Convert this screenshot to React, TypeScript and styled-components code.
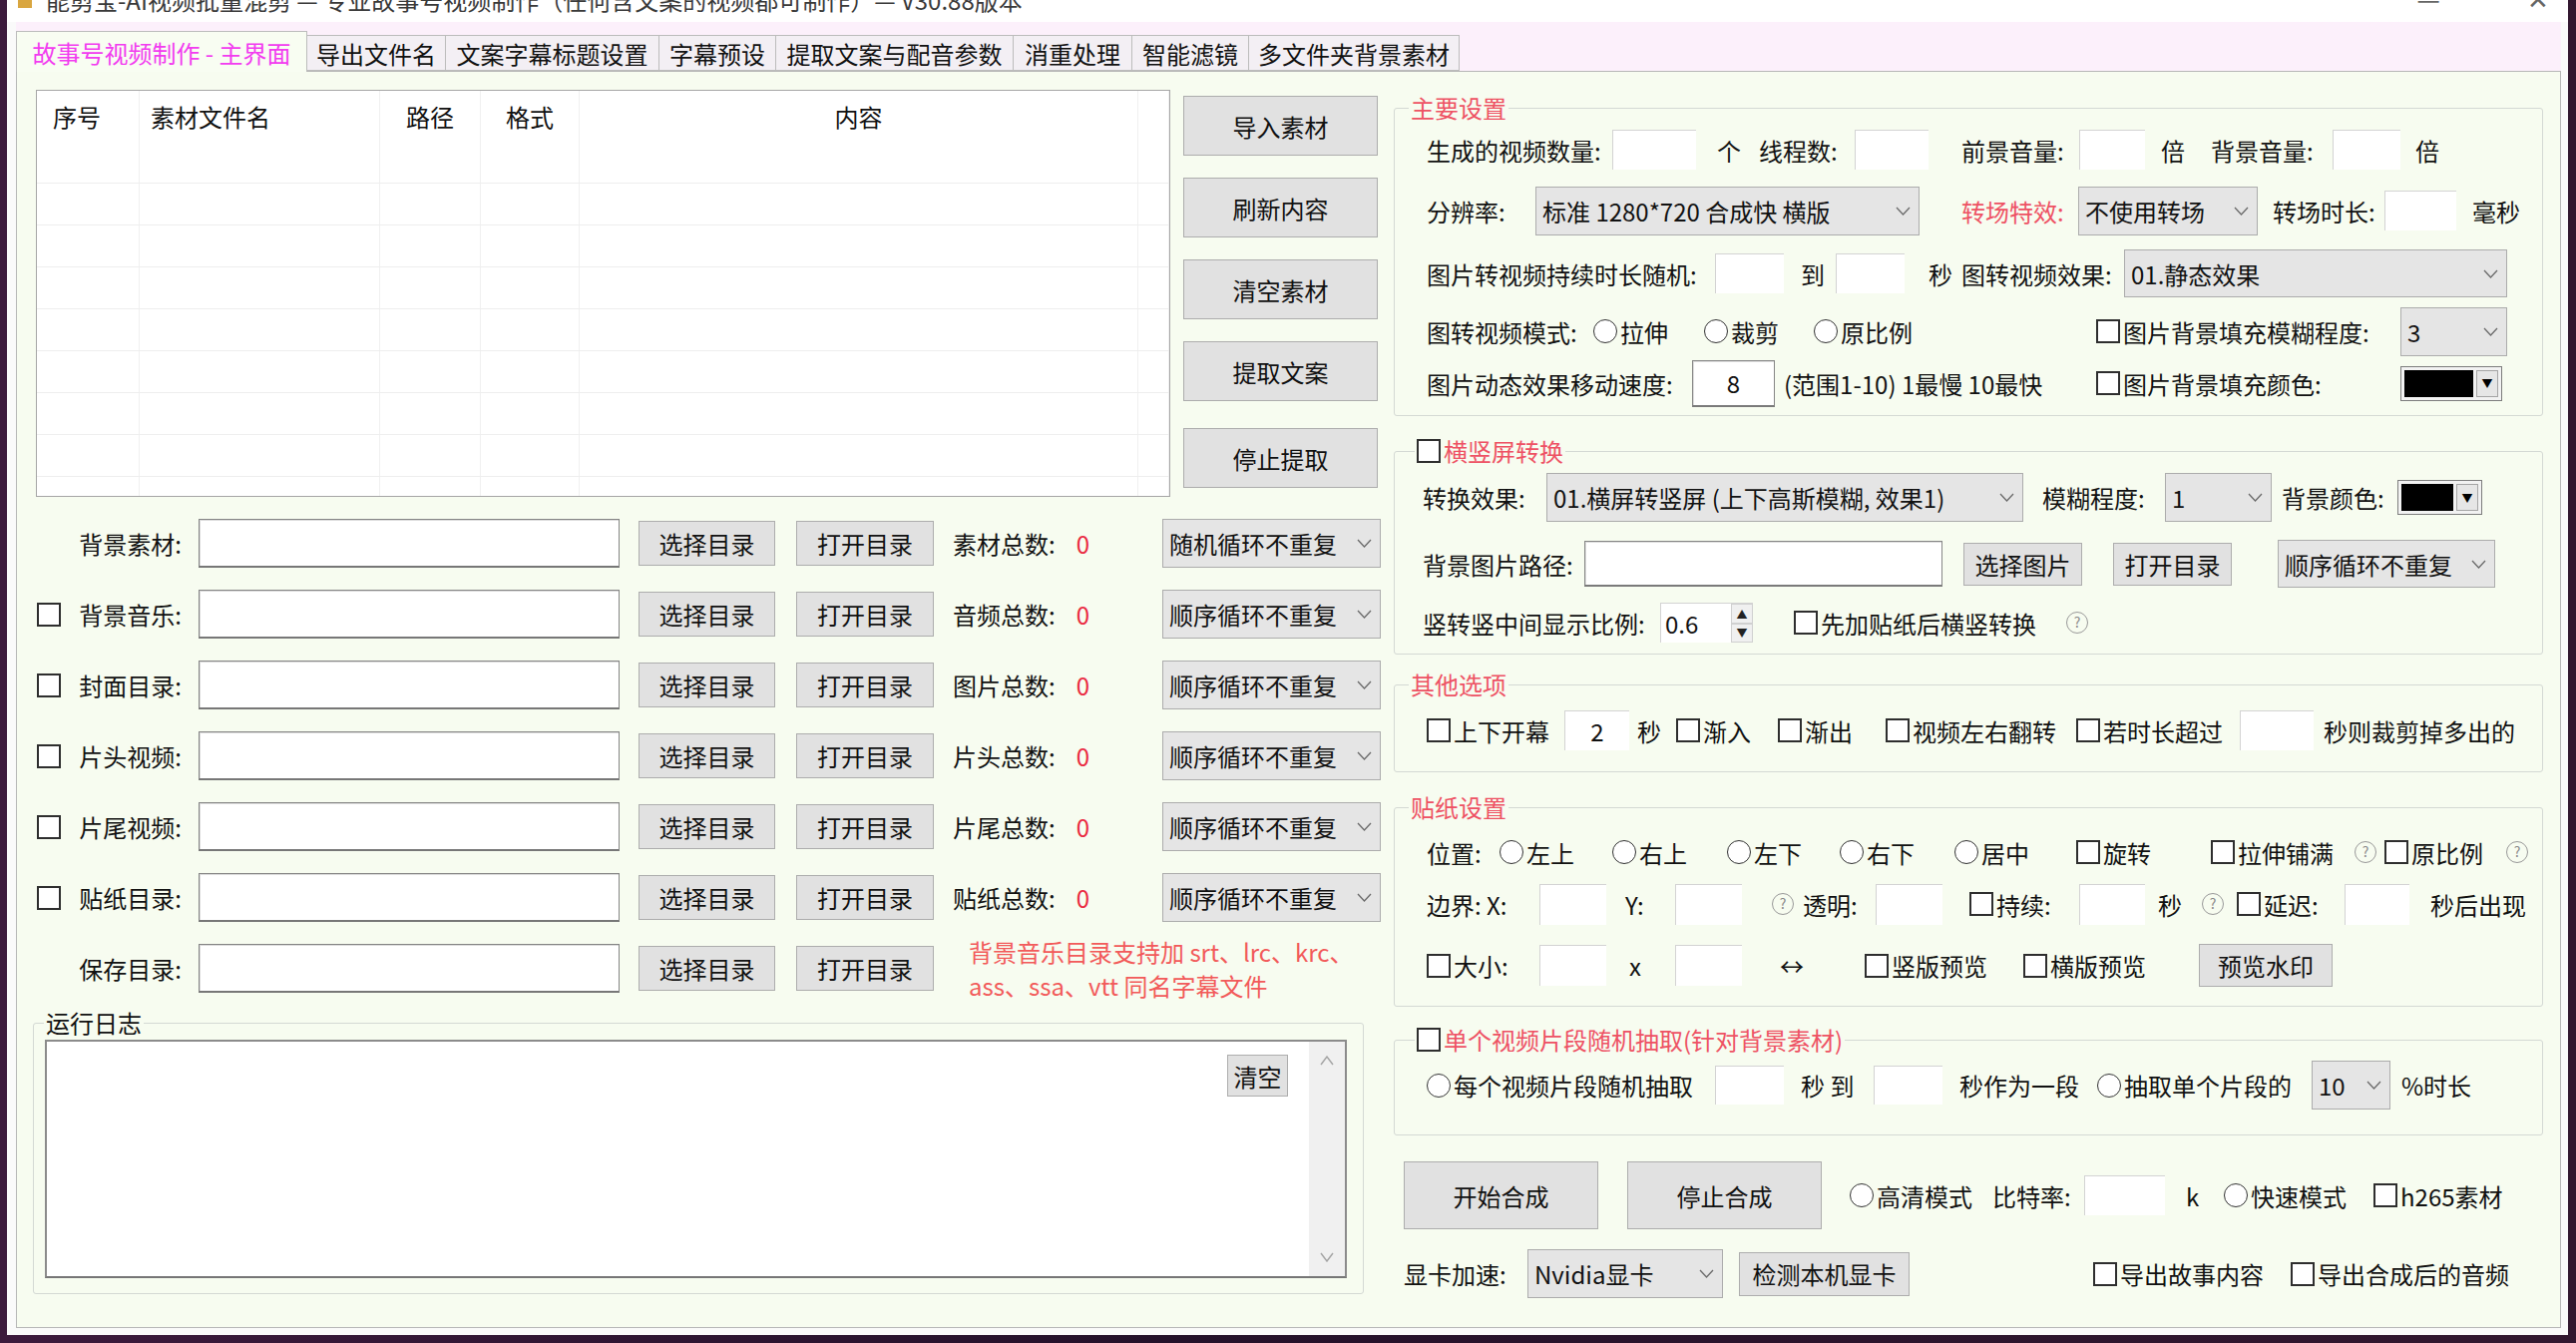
import React from 'react';
import styled, { createGlobalStyle } from 'styled-components';

const FONT = `"Noto Sans CJK SC", "Noto Sans", "Liberation Sans", sans-serif`;
const RED = '#ee5264';

const GlobalStyle = createGlobalStyle`
  html, body { margin: 0; padding: 0; background: #26122b; }
  body { font-family: ${FONT}; font-size: 24px; color: #111; }
  * { box-sizing: border-box; }
`;

const Screen = styled.div`
  width: 2582px;
  height: 1346px;
  overflow: hidden;
  padding-left: 7px;
  background: linear-gradient(90deg, #3c1a3c 0%, #24112a 45%, #32172f 100%);
`;

const Window = styled.div`
  width: 2567px;
  height: 1338px;
  background: #fafafa;
  display: flex;
  flex-direction: column;
`;

const TitleBar = styled.div`
  height: 22px;
  flex-shrink: 0;
  overflow: hidden;
  display: flex;
  align-items: flex-start;
  background: #fff;
  padding-left: 11px;
`;

const TitleIcon = styled.span`
  width: 14px;
  height: 8px;
  margin-right: 14px;
  background: #d9a640;
  flex-shrink: 0;
`;

const TitleText = styled.span`
  font-size: 24px;
  line-height: 24px;
  margin-top: -12px;
  color: #3a3a3a;
  white-space: nowrap;
  flex: 1;
`;

const TitleCtl = styled.span<{ $w: number }>`
  width: ${(p) => p.$w}px;
  font-size: 26px;
  line-height: 26px;
  margin-top: -15px;
  color: #666;
  text-align: center;
`;

const TabControl = styled.div`
  margin: 0 7px 0 9px;
  display: flex;
  flex-direction: column;
`;

const TabStrip = styled.div`
  height: 49px;
  background: #fcf0fb;
  display: flex;
  align-items: flex-end;
`;

const Tab = styled.div<{ $w: number; $active?: boolean }>`
  width: ${(p) => p.$w}px;
  height: ${(p) => (p.$active ? 41 : 36)}px;
  margin-bottom: ${(p) => (p.$active ? -1 : 0)}px;
  border: 1px solid #bcbcbc;
  border-bottom: ${(p) => (p.$active ? 'none' : '1px solid #bcbcbc')};
  background: ${(p) => (p.$active ? '#f8fdf2' : '#f3eff4')};
  color: ${(p) => (p.$active ? '#f23cf0' : '#111')};
  display: flex;
  align-items: center;
  justify-content: center;
  white-space: nowrap;
  position: relative;
  z-index: ${(p) => (p.$active ? 2 : 1)};
  flex-shrink: 0;
  & + & {
    margin-left: -1px;
  }
`;

const Panel = styled.div`
  height: 1260px;
  border: 1px solid #b7b7b7;
  background: #f7fcf0;
  display: flex;
  gap: 12px;
  padding-left: 16px;
`;

const Column = styled.div<{ $w: number }>`
  width: ${(p) => p.$w}px;
  flex-shrink: 0;
  display: flex;
  flex-direction: column;
`;

/* ---------- generic controls ---------- */

const Txt = styled.span<{ $w?: number; $ml?: number; $c?: string }>`
  display: inline-block;
  flex-shrink: 0;
  white-space: nowrap;
  width: ${(p) => (p.$w ? `${p.$w}px` : 'auto')};
  margin-left: ${(p) => p.$ml ?? 0}px;
  color: ${(p) => p.$c ?? '#111'};
`;

const Inp = styled.div<{ $w: number; $h: number; $ml?: number }>`
  width: ${(p) => p.$w}px;
  height: ${(p) => p.$h}px;
  margin-left: ${(p) => p.$ml ?? 0}px;
  flex-shrink: 0;
  background: #fff;
  border-top: 1px solid #d3d3d3;
  border-left: 1px solid #d3d3d3;
  display: flex;
  align-items: center;
  justify-content: center;
`;

const FramedInp = styled.div<{ $w: number; $h: number; $ml?: number }>`
  width: ${(p) => p.$w}px;
  height: ${(p) => p.$h}px;
  margin-left: ${(p) => p.$ml ?? 0}px;
  flex-shrink: 0;
  background: #fff;
  border: 1px solid #868686;
  border-bottom: 2px solid #7a7a7a;
  box-shadow: inset 1px 1px 0 #dedede;
  display: flex;
  align-items: center;
  justify-content: center;
`;

const Btn = styled.div<{ $w: number; $h: number; $ml?: number; $mt?: number }>`
  width: ${(p) => p.$w}px;
  height: ${(p) => p.$h}px;
  margin-left: ${(p) => p.$ml ?? 0}px;
  margin-top: ${(p) => p.$mt ?? 0}px;
  flex-shrink: 0;
  background: #e1e1e1;
  border: 1px solid #adadad;
  display: flex;
  align-items: center;
  justify-content: center;
  white-space: nowrap;
  color: #111;
`;

const SelBox = styled.div<{ $w: number; $h: number; $ml?: number }>`
  width: ${(p) => p.$w}px;
  height: ${(p) => p.$h}px;
  margin-left: ${(p) => p.$ml ?? 0}px;
  flex-shrink: 0;
  background: #e5e5e5;
  border: 1px solid #acacac;
  display: flex;
  align-items: center;
  justify-content: space-between;
  padding: 0 8px 0 6px;
  white-space: nowrap;
  overflow: hidden;
`;

const ChevronSvg = styled.svg`
  flex-shrink: 0;
`;

const Chevron = () => (
  <ChevronSvg width="15" height="9" viewBox="0 0 15 9">
    <polyline points="1,1 7.5,8 14,1" fill="none" stroke="#6a6a6a" strokeWidth="1.3" />
  </ChevronSvg>
);

type SelProps = { w: number; h: number; ml?: number; children: React.ReactNode };
const Select = ({ w, h, ml, children }: SelProps) => (
  <SelBox $w={w} $h={h} $ml={ml}>
    <span>{children}</span>
    <Chevron />
  </SelBox>
);

const CheckBox = styled.span`
  width: 24px;
  height: 24px;
  border: 2px solid #2e2e2e;
  background: #fff;
  flex-shrink: 0;
`;

const RadioDot = styled.span`
  width: 24px;
  height: 24px;
  border: 1.5px solid #333;
  border-radius: 50%;
  background: #fff;
  flex-shrink: 0;
`;

const OptWrap = styled.span<{ $w?: number; $ml?: number; $c?: string }>`
  display: inline-flex;
  align-items: center;
  gap: 3px;
  flex-shrink: 0;
  white-space: nowrap;
  width: ${(p) => (p.$w ? `${p.$w}px` : 'auto')};
  margin-left: ${(p) => p.$ml ?? 0}px;
  color: ${(p) => p.$c ?? '#111'};
`;

type OptProps = { radio?: boolean; w?: number; ml?: number; c?: string; children: React.ReactNode };
const Opt = ({ radio, w, ml, c, children }: OptProps) => (
  <OptWrap $w={w} $ml={ml} $c={c}>
    {radio ? <RadioDot /> : <CheckBox />}
    <span>{children}</span>
  </OptWrap>
);

const Help = styled.span<{ $ml?: number }>`
  width: 22px;
  height: 22px;
  margin-left: ${(p) => p.$ml ?? 0}px;
  flex-shrink: 0;
  border: 1.5px solid #999;
  border-radius: 50%;
  color: #888;
  font-size: 14px;
  line-height: 19px;
  text-align: center;
`;

const ColorBox = styled.div<{ $w: number; $h: number; $ml?: number }>`
  width: ${(p) => p.$w}px;
  height: ${(p) => p.$h}px;
  margin-left: ${(p) => p.$ml ?? 0}px;
  flex-shrink: 0;
  display: flex;
  gap: 3px;
  padding: 3px;
  border: 1px solid #7d7d7d;
  background: #f2f2f2;
`;

const Swatch = styled.div`
  flex: 1;
  background: #000;
`;

const ColorArrow = styled.div`
  width: 22px;
  background: #e6e6e6;
  border: 1px solid #a5a5a5;
  display: flex;
  align-items: center;
  justify-content: center;
  font-size: 11px;
  color: #000;
`;

const ColorPick = ({ w, h, ml }: { w: number; h: number; ml?: number }) => (
  <ColorBox $w={w} $h={h} $ml={ml}>
    <Swatch />
    <ColorArrow>▼</ColorArrow>
  </ColorBox>
);

const SpinBox = styled.div<{ $w: number; $h: number }>`
  width: ${(p) => p.$w}px;
  height: ${(p) => p.$h}px;
  flex-shrink: 0;
  display: flex;
  background: #fff;
  border-top: 1px solid #d3d3d3;
  border-left: 1px solid #d3d3d3;
`;

const SpinText = styled.span`
  flex: 1;
  display: flex;
  align-items: center;
  padding-left: 4px;
`;

const SpinBtns = styled.div`
  width: 22px;
  display: flex;
  flex-direction: column;
`;

const SpinHalf = styled.div`
  flex: 1;
  background: #f0f0f0;
  border: 1px solid #d0d0d0;
  display: flex;
  align-items: center;
  justify-content: center;
  font-size: 11px;
  color: #222;
`;

/* ---------- rows / groups ---------- */

const Row = styled.div<{ $h: number; $mt: number }>`
  display: flex;
  align-items: center;
  height: ${(p) => p.$h}px;
  margin-top: ${(p) => p.$mt}px;
  white-space: nowrap;
`;

const Group = styled.fieldset<{ $mt: number; $pb: number; $pl?: number; $pr?: number; $mr?: number }>`
  margin: ${(p) => p.$mt}px ${(p) => p.$mr ?? 0}px 0 0;
  padding: 0 ${(p) => p.$pr ?? 0}px ${(p) => p.$pb}px ${(p) => p.$pl ?? 0}px;
  border: 1px solid #d4d9d4;
  border-radius: 3px;
  min-width: 0;
`;

const Legend = styled.legend<{ $ml: number; $c?: string }>`
  margin-left: ${(p) => p.$ml}px;
  padding: 0 2px;
  line-height: 34px;
  color: ${(p) => p.$c ?? '#111'};
  display: flex;
  align-items: center;
  gap: 3px;
`;

/* ---------- left: list ---------- */

const TopArea = styled.div`
  margin-top: 18px;
  padding-left: 3px;
  height: 408px;
  display: flex;
`;

const ListView = styled.div`
  width: 1137px;
  height: 408px;
  flex-shrink: 0;
  border: 1px solid #a6a6a6;
  background: #fff;
  overflow: hidden;
`;

const GridRow = styled.div<{ $h: number; $line?: boolean }>`
  display: grid;
  grid-template-columns: 103px 241px 101px 99px 560px 1fr;
  height: ${(p) => p.$h}px;
  border-bottom: ${(p) => (p.$line ? '1px solid #eeeeee' : 'none')};
`;

const Cell = styled.div<{ $center?: boolean; $pl?: number }>`
  border-right: 1px solid #f0f0f0;
  display: flex;
  align-items: center;
  justify-content: ${(p) => (p.$center ? 'center' : 'flex-start')};
  padding-left: ${(p) => p.$pl ?? 0}px;
  white-space: nowrap;
`;

const ButtonCol = styled.div`
  margin-left: 13px;
  width: 195px;
  display: flex;
  flex-direction: column;
`;

/* ---------- left: form ---------- */

const FormList = styled.div`
  margin-top: 22px;
  display: flex;
  flex-direction: column;
  gap: 22px;
`;

const FormRow = styled.div`
  height: 49px;
  display: flex;
  align-items: center;
`;

const LabelCell = styled.div`
  width: 166px;
  flex-shrink: 0;
  display: flex;
  align-items: center;
  padding: 0 17px 0 4px;
`;

const LabelText = styled.span`
  margin-left: auto;
  white-space: nowrap;
`;

const SunkenInp = styled.div`
  width: 422px;
  height: 49px;
  flex-shrink: 0;
  background: #fff;
  border: 1px solid #858585;
  border-bottom: 2px solid #777;
  box-shadow: inset 1px 1px 0 #dcdcdc;
`;

const CountCell = styled.div`
  width: 210px;
  margin-left: 19px;
  flex-shrink: 0;
  white-space: nowrap;
`;

const Zero = styled.span`
  margin-left: 21px;
  color: #ea2a40;
`;

const Note = styled.div`
  margin-left: 35px;
  font-size: 24px;
  line-height: 34px;
  color: #f25a5a;
  white-space: nowrap;
`;

/* ---------- left: log ---------- */

const LogBox = styled.div`
  height: 239px;
  border: 2px solid #8b8b8b;
  border-bottom-color: #767676;
  background: #fff;
  display: flex;
`;

const LogContent = styled.div`
  flex: 1;
  display: flex;
  justify-content: flex-end;
  align-items: flex-start;
  padding: 13px 21px 0 0;
`;

const ScrollBar = styled.div`
  width: 36px;
  background: #f0f0f0;
  display: flex;
  flex-direction: column;
  justify-content: space-between;
  align-items: center;
  padding: 14px 0 14px;
`;

const ScrollArrow = ({ up }: { up?: boolean }) => (
  <ChevronSvg width="14" height="10" viewBox="0 0 14 10">
    <polyline
      points={up ? '1,9 7,1 13,9' : '1,1 7,9 13,1'}
      fill="none"
      stroke="#a3a3a3"
      strokeWidth="1.4"
    />
  </ChevronSvg>
);

/* ---------- data ---------- */

const tabs: { label: string; w: number }[] = [
  { label: '故事号视频制作 - 主界面', w: 292 },
  { label: '导出文件名', w: 140 },
  { label: '文案字幕标题设置', w: 215 },
  { label: '字幕预设', w: 118 },
  { label: '提取文案与配音参数', w: 239 },
  { label: '消重处理', w: 120 },
  { label: '智能滤镜', w: 118 },
  { label: '多文件夹背景素材', w: 212 },
];

const formRows: { label: string; check: boolean; count: string; mode: string }[] = [
  { label: '背景素材:', check: false, count: '素材总数:', mode: '随机循环不重复' },
  { label: '背景音乐:', check: true, count: '音频总数:', mode: '顺序循环不重复' },
  { label: '封面目录:', check: true, count: '图片总数:', mode: '顺序循环不重复' },
  { label: '片头视频:', check: true, count: '片头总数:', mode: '顺序循环不重复' },
  { label: '片尾视频:', check: true, count: '片尾总数:', mode: '顺序循环不重复' },
  { label: '贴纸目录:', check: true, count: '贴纸总数:', mode: '顺序循环不重复' },
];

const sideButtons: { label: string; mt: number }[] = [
  { label: '导入素材', mt: 6 },
  { label: '刷新内容', mt: 22 },
  { label: '清空素材', mt: 22 },
  { label: '提取文案', mt: 22 },
  { label: '停止提取', mt: 27 },
];

export default function App() {
  return (
    <>
      <GlobalStyle />
      <Screen>
        <Window>
          <TitleBar>
            <TitleIcon />
            <TitleText>
              能剪宝-AI视频批量混剪 — 专业故事号视频制作（任何含文案的视频都可制作）— V30.88版本
            </TitleText>
            <TitleCtl $w={60}>—</TitleCtl>
            <TitleCtl $w={50} />
            <TitleCtl $w={60}>✕</TitleCtl>
          </TitleBar>
          <TabControl>
            <TabStrip>
              {tabs.map((t, i) => (
                <Tab key={t.label} $w={t.w} $active={i === 0}>
                  {t.label}
                </Tab>
              ))}
            </TabStrip>
            <Panel>
              {/* LEFT COLUMN */}
              <Column $w={1352}>
                <TopArea>
                  <ListView>
                    <GridRow $h={51}>
                      <Cell $pl={16}>序号</Cell>
                      <Cell $pl={11}>素材文件名</Cell>
                      <Cell $center>路径</Cell>
                      <Cell $center>格式</Cell>
                      <Cell $center>内容</Cell>
                      <Cell />
                    </GridRow>
                    {Array.from({ length: 9 }).map((_, i) => (
                      <GridRow key={i} $h={42} $line>
                        <Cell />
                        <Cell />
                        <Cell />
                        <Cell />
                        <Cell />
                        <Cell />
                      </GridRow>
                    ))}
                  </ListView>
                  <ButtonCol>
                    {sideButtons.map((b) => (
                      <Btn key={b.label} $w={195} $h={60} $mt={b.mt}>
                        {b.label}
                      </Btn>
                    ))}
                  </ButtonCol>
                </TopArea>

                <FormList>
                  {formRows.map((r) => (
                    <FormRow key={r.label}>
                      <LabelCell>
                        {r.check && <CheckBox />}
                        <LabelText>{r.label}</LabelText>
                      </LabelCell>
                      <SunkenInp />
                      <Btn $w={137} $h={45} $ml={19}>选择目录</Btn>
                      <Btn $w={138} $h={45} $ml={21}>打开目录</Btn>
                      <CountCell>
                        {r.count}
                        <Zero>0</Zero>
                      </CountCell>
                      <Select w={219} h={49}>{r.mode}</Select>
                    </FormRow>
                  ))}
                  <FormRow>
                    <LabelCell>
                      <LabelText>保存目录:</LabelText>
                    </LabelCell>
                    <SunkenInp />
                    <Btn $w={137} $h={45} $ml={19}>选择目录</Btn>
                    <Btn $w={138} $h={45} $ml={21}>打开目录</Btn>
                    <Note>
                      背景音乐目录支持加 srt、lrc、krc、
                      <br />
                      ass、ssa、vtt 同名字幕文件
                    </Note>
                  </FormRow>
                </FormList>

                <Group $mt={13} $pb={15} $pl={11} $pr={16} $mr={18}>
                  <Legend $ml={-1}>运行日志</Legend>
                  <LogBox>
                    <LogContent>
                      <Btn $w={61} $h={42}>清空</Btn>
                    </LogContent>
                    <ScrollBar>
                      <ScrollArrow up />
                      <ScrollArrow />
                    </ScrollBar>
                  </LogBox>
                </Group>
              </Column>

              {/* RIGHT COLUMN */}
              <Column $w={1152}>
                <Group $mt={19} $pb={8}>
                  <Legend $ml={14} $c={RED}>主要设置</Legend>
                  <Row $h={48} $mt={1}>
                    <Txt $ml={32} $w={186}>生成的视频数量:</Txt>
                    <Inp $w={84} $h={40} />
                    <Txt $ml={21} $w={42}>个</Txt>
                    <Txt $w={96}>线程数:</Txt>
                    <Inp $w={74} $h={40} />
                    <Txt $ml={33} $w={118}>前景音量:</Txt>
                    <Inp $w={66} $h={40} />
                    <Txt $ml={16} $w={50}>倍</Txt>
                    <Txt $w={122}>背景音量:</Txt>
                    <Inp $w={68} $h={40} />
                    <Txt $ml={15}>倍</Txt>
                  </Row>
                  <Row $h={50} $mt={12}>
                    <Txt $ml={32} $w={109}>分辨率:</Txt>
                    <Select w={385} h={49}>标准 1280*720 合成快 横版</Select>
                    <Txt $ml={42} $w={117} $c={RED}>转场特效:</Txt>
                    <Select w={180} h={49}>不使用转场</Select>
                    <Txt $ml={15} $w={112}>转场时长:</Txt>
                    <Inp $w={72} $h={40} />
                    <Txt $ml={16}>毫秒</Txt>
                  </Row>
                  <Row $h={48} $mt={14}>
                    <Txt $ml={32} $w={289}>图片转视频持续时长随机:</Txt>
                    <Inp $w={69} $h={40} />
                    <Txt $ml={17} $w={35}>到</Txt>
                    <Inp $w={69} $h={40} />
                    <Txt $ml={24} $w={33}>秒</Txt>
                    <Txt $w={163}>图转视频效果:</Txt>
                    <Select w={384} h={48}>01.静态效果</Select>
                  </Row>
                  <Row $h={50} $mt={9}>
                    <Txt $ml={32} $w={167}>图转视频模式:</Txt>
                    <Opt radio w={111}>拉伸</Opt>
                    <Opt radio w={110}>裁剪</Opt>
                    <Opt radio w={283}>原比例</Opt>
                    <Opt w={305}>图片背景填充模糊程度:</Opt>
                    <Select w={107} h={49}>3</Select>
                  </Row>
                  <Row $h={48} $mt={3}>
                    <Txt $ml={32} $w={266}>图片动态效果移动速度:</Txt>
                    <FramedInp $w={83} $h={47}>8</FramedInp>
                    <Txt $ml={9} $w={313}>(范围1-10) 1最慢 10最快</Txt>
                    <Opt w={305}>图片背景填充颜色:</Opt>
                    <ColorPick w={102} h={35} />
                  </Row>
                </Group>

                <Group $mt={18} $pb={11}>
                  <Legend $ml={20} $c={RED}>
                    <CheckBox />
                    横竖屏转换
                  </Legend>
                  <Row $h={49} $mt={5}>
                    <Txt $ml={28} $w={124}>转换效果:</Txt>
                    <Select w={478} h={49}>01.横屏转竖屏 (上下高斯模糊, 效果1)</Select>
                    <Txt $ml={19} $w={123}>模糊程度:</Txt>
                    <Select w={107} h={49}>1</Select>
                    <Txt $ml={10} $w={116}>背景颜色:</Txt>
                    <ColorPick w={85} h={35} />
                  </Row>
                  <Row $h={48} $mt={18}>
                    <Txt $ml={28} $w={162}>背景图片路径:</Txt>
                    <FramedInp $w={359} $h={46} />
                    <Btn $ml={21} $w={119} $h={43}>选择图片</Btn>
                    <Btn $ml={31} $w={119} $h={43}>打开目录</Btn>
                    <Select ml={46} w={218} h={48}>顺序循环不重复</Select>
                  </Row>
                  <Row $h={40} $mt={15}>
                    <Txt $ml={28} $w={238}>竖转竖中间显示比例:</Txt>
                    <SpinBox $w={93} $h={40}>
                      <SpinText>0.6</SpinText>
                      <SpinBtns>
                        <SpinHalf>▲</SpinHalf>
                        <SpinHalf>▼</SpinHalf>
                      </SpinBtns>
                    </SpinBox>
                    <Opt ml={41}>先加贴纸后横竖转换</Opt>
                    <Help $ml={30}>?</Help>
                  </Row>
                </Group>

                <Group $mt={13} $pb={21}>
                  <Legend $ml={14} $c={RED}>其他选项</Legend>
                  <Row $h={40} $mt={9}>
                    <Opt ml={32} w={138}>上下开幕</Opt>
                    <Inp $w={65} $h={40}>2</Inp>
                    <Txt $ml={8} $w={39}>秒</Txt>
                    <Opt w={102}>渐入</Opt>
                    <Opt w={108}>渐出</Opt>
                    <Opt w={191}>视频左右翻转</Opt>
                    <Opt w={164}>若时长超过</Opt>
                    <Inp $w={74} $h={40} />
                    <Txt $ml={10}>秒则裁剪掉多出的</Txt>
                  </Row>
                </Group>

                <Group $mt={18} $pb={19}>
                  <Legend $ml={14} $c={RED}>贴纸设置</Legend>
                  <Row $h={40} $mt={8}>
                    <Txt $ml={32} $w={73}>位置:</Txt>
                    <Opt radio w={113}>左上</Opt>
                    <Opt radio w={115}>右上</Opt>
                    <Opt radio w={113}>左下</Opt>
                    <Opt radio w={115}>右下</Opt>
                    <Opt radio w={122}>居中</Opt>
                    <Opt w={135}>旋转</Opt>
                    <Opt w={144}>拉伸铺满</Opt>
                    <Help>?</Help>
                    <Opt ml={8} w={122}>原比例</Opt>
                    <Help>?</Help>
                  </Row>
                  <Row $h={42} $mt={11}>
                    <Txt $ml={32} $w={113}>边界: X:</Txt>
                    <Inp $w={67} $h={41} />
                    <Txt $ml={19} $w={50}>Y:</Txt>
                    <Inp $w={67} $h={41} />
                    <Help $ml={30}>?</Help>
                    <Txt $ml={9} $w={73}>透明:</Txt>
                    <Inp $w={67} $h={41} />
                    <Opt ml={27} w={110}>持续:</Opt>
                    <Inp $w={66} $h={41} />
                    <Txt $ml={13} $w={44}>秒</Txt>
                    <Help>?</Help>
                    <Opt ml={13} w={108}>延迟:</Opt>
                    <Inp $w={65} $h={41} />
                    <Txt $ml={21}>秒后出现</Txt>
                  </Row>
                  <Row $h={43} $mt={19}>
                    <Opt ml={32} w={113}>大小:</Opt>
                    <Inp $w={67} $h={41} />
                    <Txt $ml={23} $w={46}>x</Txt>
                    <Inp $w={67} $h={41} />
                    <Txt $ml={38} $w={85}>↔</Txt>
                    <Opt w={159}>竖版预览</Opt>
                    <Opt w={176}>横版预览</Opt>
                    <Btn $w={134} $h={43}>预览水印</Btn>
                  </Row>
                </Group>

                <Group $mt={16} $pb={25}>
                  <Legend $ml={20} $c={RED}>
                    <CheckBox />
                    单个视频片段随机抽取(针对背景素材)
                  </Legend>
                  <Row $h={49} $mt={4}>
                    <Opt radio ml={32} w={289}>每个视频片段随机抽取</Opt>
                    <Inp $w={69} $h={39} />
                    <Txt $ml={17} $w={73}>秒 到</Txt>
                    <Inp $w={69} $h={39} />
                    <Txt $ml={17} $w={138}>秒作为一段</Txt>
                    <Opt radio w={215}>抽取单个片段的</Opt>
                    <Select w={79} h={49}>10</Select>
                    <Txt $ml={11}>%时长</Txt>
                  </Row>
                </Group>

                <Row $h={68} $mt={26}>
                  <Btn $ml={10} $w={195} $h={68}>开始合成</Btn>
                  <Btn $ml={29} $w={195} $h={68}>停止合成</Btn>
                  <Opt radio ml={28} w={143}>高清模式</Opt>
                  <Txt $w={92}>比特率:</Txt>
                  <Inp $w={81} $h={40} />
                  <Txt $ml={21} $w={38}>k</Txt>
                  <Opt radio w={150}>快速模式</Opt>
                  <Opt>h265素材</Opt>
                </Row>
                <Row $h={49} $mt={20}>
                  <Txt $ml={10} $w={124}>显卡加速:</Txt>
                  <Select w={196} h={49}>Nvidia显卡</Select>
                  <Btn $ml={16} $w={171} $h={44}>检测本机显卡</Btn>
                  <Opt ml={184} w={198}>导出故事内容</Opt>
                  <Opt>导出合成后的音频</Opt>
                </Row>
              </Column>
            </Panel>
          </TabControl>
        </Window>
      </Screen>
    </>
  );
}
